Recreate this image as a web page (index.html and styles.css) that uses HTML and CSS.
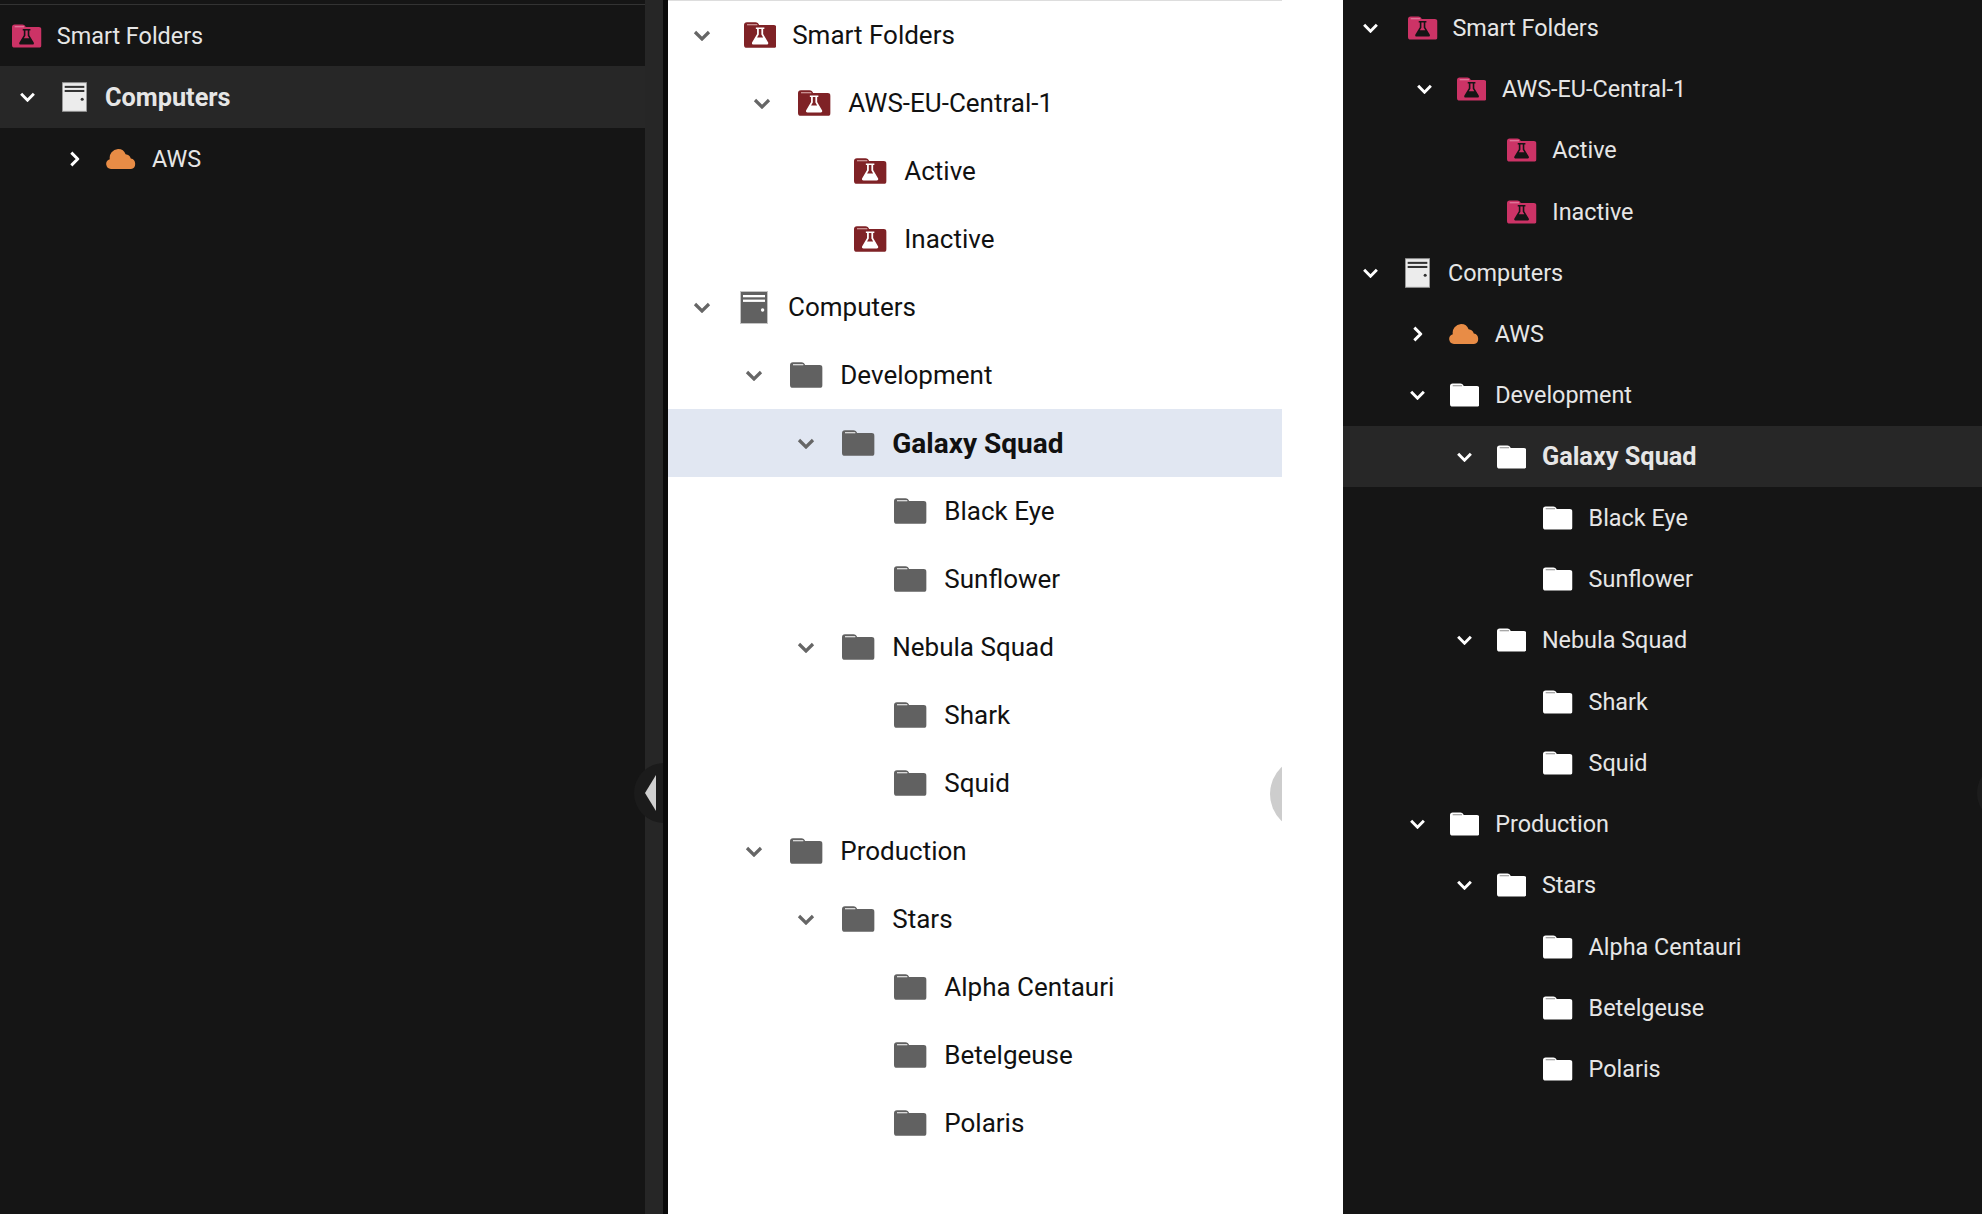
FILE: index.html
```html
<!DOCTYPE html>
<html lang="en">
<head>
<meta charset="utf-8">
<title>Folder trees</title>
<link rel="stylesheet" href="styles.css">
</head>
<body>
<svg class="defs" width="0" height="0" aria-hidden="true">
  <symbol id="chev" viewBox="0 0 18 11"><polyline class="chev-line" points="2,2 9,9 16,2"/></symbol>
  <symbol id="folder" viewBox="0 0 33 26">
    <path class="folder-body" d="M3 0h8.500c2 0 3.300 1 3.800 3H30a3 3 0 0 1 3 3v17a3 3 0 0 1-3 3H3a3 3 0 0 1-3-3V3a3 3 0 0 1 3-3z"/>
    <path class="folder-line" d="M3 2.600h10.500"/>
  </symbol>
  <symbol id="smart" viewBox="0 0 33 26">
    <path class="folder-body" d="M3 0h8.500c2 0 3.300 1 3.800 3H30a3 3 0 0 1 3 3v17a3 3 0 0 1-3 3H3a3 3 0 0 1-3-3V3a3 3 0 0 1 3-3z"/>
    <path class="folder-line" d="M3 2.600h10.500"/>
    <path class="flask" fill-rule="evenodd" d="M12 5.300h8.600v1.600h-1.200v5.200l4.900 8.200c.7 1.200 0 2.300-1.300 2.300H9.600c-1.300 0-2-1.100-1.300-2.300l4.900-8.200V6.900H12zM15 6.900v5.700l-1.800 3h6.200l-1.800-3V6.900z"/>
  </symbol>
  <symbol id="computer" viewBox="0 0 28 33">
    <rect class="pc-body" x=".5" y=".5" width="27" height="32"/>
    <rect class="pc-mark" x="3" y="4" width="22" height="2.300"/>
    <rect class="pc-mark" x="3" y="8.600" width="22" height="2.300"/>
    <circle class="pc-mark" cx="22.600" cy="19" r="1.700"/>
  </symbol>
  <symbol id="cloud" viewBox="0 0 30 20">
    <path class="cloud-body" d="M5 20A5 5 0 0 1 3.800 10.200 8.700 8.700 0 0 1 12 0a8 8 0 0 1 7.600 5.300 6 6 0 0 1 5.200 4.300A5.300 5.300 0 0 1 25 20z"/>
  </symbol>
</svg>

<main class="screen">
  <div class="left-wrap">
    <section class="panel dark left">
      <div class="tree">
        <div class="row k-smart bare"><svg class="ico ico-folder"><use href="#smart"/></svg><span class="label">Smart Folders</span></div>
        <div class="row k-pc selected l-d0"><span class="slot"><svg class="chev"><use href="#chev"/></svg></span><svg class="ico ico-pc"><use href="#computer"/></svg><span class="label">Computers</span></div>
        <div class="row k-cloud l-d1"><span class="slot"><svg class="chev closed"><use href="#chev"/></svg></span><svg class="ico ico-cloud"><use href="#cloud"/></svg><span class="label">AWS</span></div>
      </div>
    </section>
    <div class="track"></div>
    <div class="handle handle-left"><span class="arrow"></span></div>
  </div>
  <div class="gutter"></div>

  <section class="panel light">
    <div class="pane">
      <div class="tree">
        <div class="row k-smart d0"><span class="slot"><svg class="chev"><use href="#chev"/></svg></span><svg class="ico ico-folder"><use href="#smart"/></svg><span class="label">Smart Folders</span></div>
        <div class="row k-smart2 s1"><span class="slot"><svg class="chev"><use href="#chev"/></svg></span><svg class="ico ico-folder"><use href="#smart"/></svg><span class="label">AWS-EU-Central-1</span></div>
        <div class="row k-smart2 s2"><span class="slot"></span><svg class="ico ico-folder"><use href="#smart"/></svg><span class="label">Active</span></div>
        <div class="row k-smart2 s2"><span class="slot"></span><svg class="ico ico-folder"><use href="#smart"/></svg><span class="label">Inactive</span></div>
        <div class="row k-pc d0"><span class="slot"><svg class="chev"><use href="#chev"/></svg></span><svg class="ico ico-pc"><use href="#computer"/></svg><span class="label">Computers</span></div>
        <div class="row k-folder d1"><span class="slot"><svg class="chev"><use href="#chev"/></svg></span><svg class="ico ico-folder"><use href="#folder"/></svg><span class="label">Development</span></div>
        <div class="row k-folder d2 selected"><span class="slot"><svg class="chev"><use href="#chev"/></svg></span><svg class="ico ico-folder"><use href="#folder"/></svg><span class="label">Galaxy Squad</span></div>
        <div class="row k-folder d3"><span class="slot"></span><svg class="ico ico-folder"><use href="#folder"/></svg><span class="label">Black Eye</span></div>
        <div class="row k-folder d3"><span class="slot"></span><svg class="ico ico-folder"><use href="#folder"/></svg><span class="label">Sunflower</span></div>
        <div class="row k-folder d2"><span class="slot"><svg class="chev"><use href="#chev"/></svg></span><svg class="ico ico-folder"><use href="#folder"/></svg><span class="label">Nebula Squad</span></div>
        <div class="row k-folder d3"><span class="slot"></span><svg class="ico ico-folder"><use href="#folder"/></svg><span class="label">Shark</span></div>
        <div class="row k-folder d3"><span class="slot"></span><svg class="ico ico-folder"><use href="#folder"/></svg><span class="label">Squid</span></div>
        <div class="row k-folder d1"><span class="slot"><svg class="chev"><use href="#chev"/></svg></span><svg class="ico ico-folder"><use href="#folder"/></svg><span class="label">Production</span></div>
        <div class="row k-folder d2"><span class="slot"><svg class="chev"><use href="#chev"/></svg></span><svg class="ico ico-folder"><use href="#folder"/></svg><span class="label">Stars</span></div>
        <div class="row k-folder d3"><span class="slot"></span><svg class="ico ico-folder"><use href="#folder"/></svg><span class="label">Alpha Centauri</span></div>
        <div class="row k-folder d3"><span class="slot"></span><svg class="ico ico-folder"><use href="#folder"/></svg><span class="label">Betelgeuse</span></div>
        <div class="row k-folder d3"><span class="slot"></span><svg class="ico ico-folder"><use href="#folder"/></svg><span class="label">Polaris</span></div>
      </div>
      <div class="handle handle-light"></div>
    </div>
  </section>

  <section class="panel dark right">
    <div class="tree">
      <div class="row k-smart d0"><span class="slot"><svg class="chev"><use href="#chev"/></svg></span><svg class="ico ico-folder"><use href="#smart"/></svg><span class="label">Smart Folders</span></div>
      <div class="row k-smart2 s1"><span class="slot"><svg class="chev"><use href="#chev"/></svg></span><svg class="ico ico-folder"><use href="#smart"/></svg><span class="label">AWS-EU-Central-1</span></div>
      <div class="row k-smart2 s2"><span class="slot"></span><svg class="ico ico-folder"><use href="#smart"/></svg><span class="label">Active</span></div>
      <div class="row k-smart2 s2"><span class="slot"></span><svg class="ico ico-folder"><use href="#smart"/></svg><span class="label">Inactive</span></div>
      <div class="row k-pc d0"><span class="slot"><svg class="chev"><use href="#chev"/></svg></span><svg class="ico ico-pc"><use href="#computer"/></svg><span class="label">Computers</span></div>
      <div class="row k-cloud d1"><span class="slot"><svg class="chev closed"><use href="#chev"/></svg></span><svg class="ico ico-cloud"><use href="#cloud"/></svg><span class="label">AWS</span></div>
      <div class="row k-folder d1"><span class="slot"><svg class="chev"><use href="#chev"/></svg></span><svg class="ico ico-folder"><use href="#folder"/></svg><span class="label">Development</span></div>
      <div class="row k-folder d2 selected"><span class="slot"><svg class="chev"><use href="#chev"/></svg></span><svg class="ico ico-folder"><use href="#folder"/></svg><span class="label">Galaxy Squad</span></div>
      <div class="row k-folder d3"><span class="slot"></span><svg class="ico ico-folder"><use href="#folder"/></svg><span class="label">Black Eye</span></div>
      <div class="row k-folder d3"><span class="slot"></span><svg class="ico ico-folder"><use href="#folder"/></svg><span class="label">Sunflower</span></div>
      <div class="row k-folder d2"><span class="slot"><svg class="chev"><use href="#chev"/></svg></span><svg class="ico ico-folder"><use href="#folder"/></svg><span class="label">Nebula Squad</span></div>
      <div class="row k-folder d3"><span class="slot"></span><svg class="ico ico-folder"><use href="#folder"/></svg><span class="label">Shark</span></div>
      <div class="row k-folder d3"><span class="slot"></span><svg class="ico ico-folder"><use href="#folder"/></svg><span class="label">Squid</span></div>
      <div class="row k-folder d1"><span class="slot"><svg class="chev"><use href="#chev"/></svg></span><svg class="ico ico-folder"><use href="#folder"/></svg><span class="label">Production</span></div>
      <div class="row k-folder d2"><span class="slot"><svg class="chev"><use href="#chev"/></svg></span><svg class="ico ico-folder"><use href="#folder"/></svg><span class="label">Stars</span></div>
      <div class="row k-folder d3"><span class="slot"></span><svg class="ico ico-folder"><use href="#folder"/></svg><span class="label">Alpha Centauri</span></div>
      <div class="row k-folder d3"><span class="slot"></span><svg class="ico ico-folder"><use href="#folder"/></svg><span class="label">Betelgeuse</span></div>
      <div class="row k-folder d3"><span class="slot"></span><svg class="ico ico-folder"><use href="#folder"/></svg><span class="label">Polaris</span></div>
    </div>
    <div class="handle handle-right"></div>
  </section>
</main>
</body>
</html>
```

FILE: styles.css
```css
* { box-sizing: border-box; }

html, body { margin: 0; padding: 0; background: #151515; }

.defs { position: absolute; }

.screen {
  display: flex;
  width: 1982px;
  height: 1214px;
  overflow: hidden;
  font-family: Roboto, "Liberation Sans", sans-serif;
}

.left-wrap {
  position: relative;
  display: flex;
  flex: 0 0 663px;
  overflow: hidden;
}

.gutter { flex: 0 0 5px; background: #0a0a0a; }

.track { flex: 0 0 18px; background: #262626; }

.panel { position: relative; }

/* theme variables */
.dark {
  --row: 61.2px;
  --fg: #e6e6e6;
  --chev-c: #fff;
  --folder-c: #fff;
  --folder-line: #8a8a8a;
  --smart-c: #cc3366;
  --smart-line: #e58aa8;
  --flask-c: #151515;
  --pc-c: #ececec;
  --pc-border: #9a9a9a;
  --pc-mark: #333;
  --sel: #272727;
  --chev-w: 17px;
  --chev-h: 10px;
  --f-w: 29.500px;
  --f-h: 24px;
  --pc-w: 25px;
  --pc-h: 30px;
  --bold-size: 25.300px;
  background: #151515;
  color: var(--fg);
  font-size: 23.400px;
}

.light {
  --row: 68px;
  --fg: #111;
  --chev-c: #666;
  --folder-c: #616161;
  --folder-line: #fff;
  --smart-c: #7f2226;
  --smart-line: #e0b5b5;
  --flask-c: #fff;
  --pc-c: #616161;
  --pc-border: #c4c4c4;
  --pc-mark: #fff;
  --sel: #e1e7f2;
  --chev-w: 18px;
  --chev-h: 11px;
  --f-w: 32.600px;
  --f-h: 26px;
  --pc-w: 28px;
  --pc-h: 33px;
  --bold-size: 28px;
  flex: 0 0 675px;
  background: #fff;
  color: var(--fg);
  font-size: 26px;
}

.left { flex: 0 0 645px; padding-top: 4px; --row: 61px; }
.left .tree { border-top: 1px solid #333; }
.left .selected { --row: 62px; }

.right { flex: 1 1 auto; overflow: hidden; --row: 61.240px; }
.right .tree { margin-top: -2.600px; }

.pane {
  position: relative;
  width: 614px;
  height: 100%;
  overflow: hidden;
  border-top: 1px solid #ddd;
}

/* rows */
.row {
  display: flex;
  align-items: center;
  height: var(--row);
  white-space: nowrap;
  --body: var(--folder-c);
  --line: var(--folder-line);
}

.row.k-smart,
.row.k-smart2 {
  --body: var(--smart-c);
  --line: var(--smart-line);
}

.row.selected { background: var(--sel); }
.row.selected .label { font-size: var(--bold-size); font-weight: 700; }

.slot {
  display: flex;
  flex: 0 0 24px;
  align-items: center;
  justify-content: center;
}

.chev { width: var(--chev-w); height: var(--chev-h); overflow: visible; }
.chev.closed { transform: rotate(-90deg); }
.chev-line {
  fill: none;
  stroke: var(--chev-c);
  stroke-width: 3.200;
}

.ico { flex: none; margin-left: var(--ic); }
.ico-folder { width: var(--f-w); height: var(--f-h); }
.ico-pc { width: var(--pc-w); height: var(--pc-h); }
.ico-cloud { width: 30px; height: 20px; }

.label { margin-left: var(--tx); }

.folder-body { fill: var(--body); }
.folder-line { fill: none; stroke: var(--line); stroke-width: 1.200; }
.flask { fill: var(--flask-c); }
.pc-body { fill: var(--pc-c); stroke: var(--pc-border); stroke-width: 1; }
.pc-mark { fill: var(--pc-mark); }
.cloud-body { fill: #e88c46; }

/* light panel indents */
.light .d0 { padding-left: 22px; }
.light .d1 { padding-left: 74px; }
.light .d2 { padding-left: 126px; }
.light .d3 { padding-left: 178px; }
.light .s1 { padding-left: 82px; }
.light .s2 { padding-left: 138px; }
.light .k-folder { --ic: 24px; --tx: 17.700px; }
.light .k-smart { --ic: 29.700px; --tx: 15.900px; }
.light .k-smart2 { --ic: 24px; --tx: 17.700px; }
.light .k-pc { --ic: 26px; --tx: 20px; }

/* right panel indents */
.right .d0 { padding-left: 15.700px; }
.right .d1 { padding-left: 62.400px; }
.right .d2 { padding-left: 109.100px; }
.right .d3 { padding-left: 155.800px; }
.right .s1 { padding-left: 69.700px; }
.right .s2 { padding-left: 120px; }
.right .k-folder { --ic: 20.500px; --tx: 15.800px; }
.right .k-smart { --ic: 25.600px; --tx: 14.700px; }
.right .k-smart2 { --ic: 20px; --tx: 15.800px; }
.right .k-pc { --ic: 22.300px; --tx: 18px; }
.right .k-cloud { --ic: 19.700px; --tx: 15.700px; }

/* left panel indents */
.left .bare { padding-left: 12.300px; }
.left .l-d0 { padding-left: 15.300px; }
.left .l-d1 { padding-left: 62px; }
.left .k-smart { --ic: 0px; --tx: 15px; }
.left .k-pc { --ic: 22.700px; --tx: 18px; }
.left .k-cloud { --ic: 20px; --tx: 16px; }

/* collapse handles sit over the panels */
.handle { position: absolute; border-radius: 50%; }

.handle-left {
  left: 634px;
  top: 763px;
  width: 60px;
  height: 60px;
  background: #1b1b1b;
}

.arrow {
  position: absolute;
  left: 11px;
  top: 12px;
  width: 11px;
  height: 36px;
  background: #cfcfcf;
  clip-path: polygon(100% 0, 100% 100%, 0 50%);
}

.handle-light {
  left: 602px;
  top: 756px;
  width: 74px;
  height: 74px;
  background: #cdcdcd;
}

.handle-right {
  left: 634px;
  top: 763px;
  width: 60px;
  height: 60px;
  background: #1c1c1c;
}
```
